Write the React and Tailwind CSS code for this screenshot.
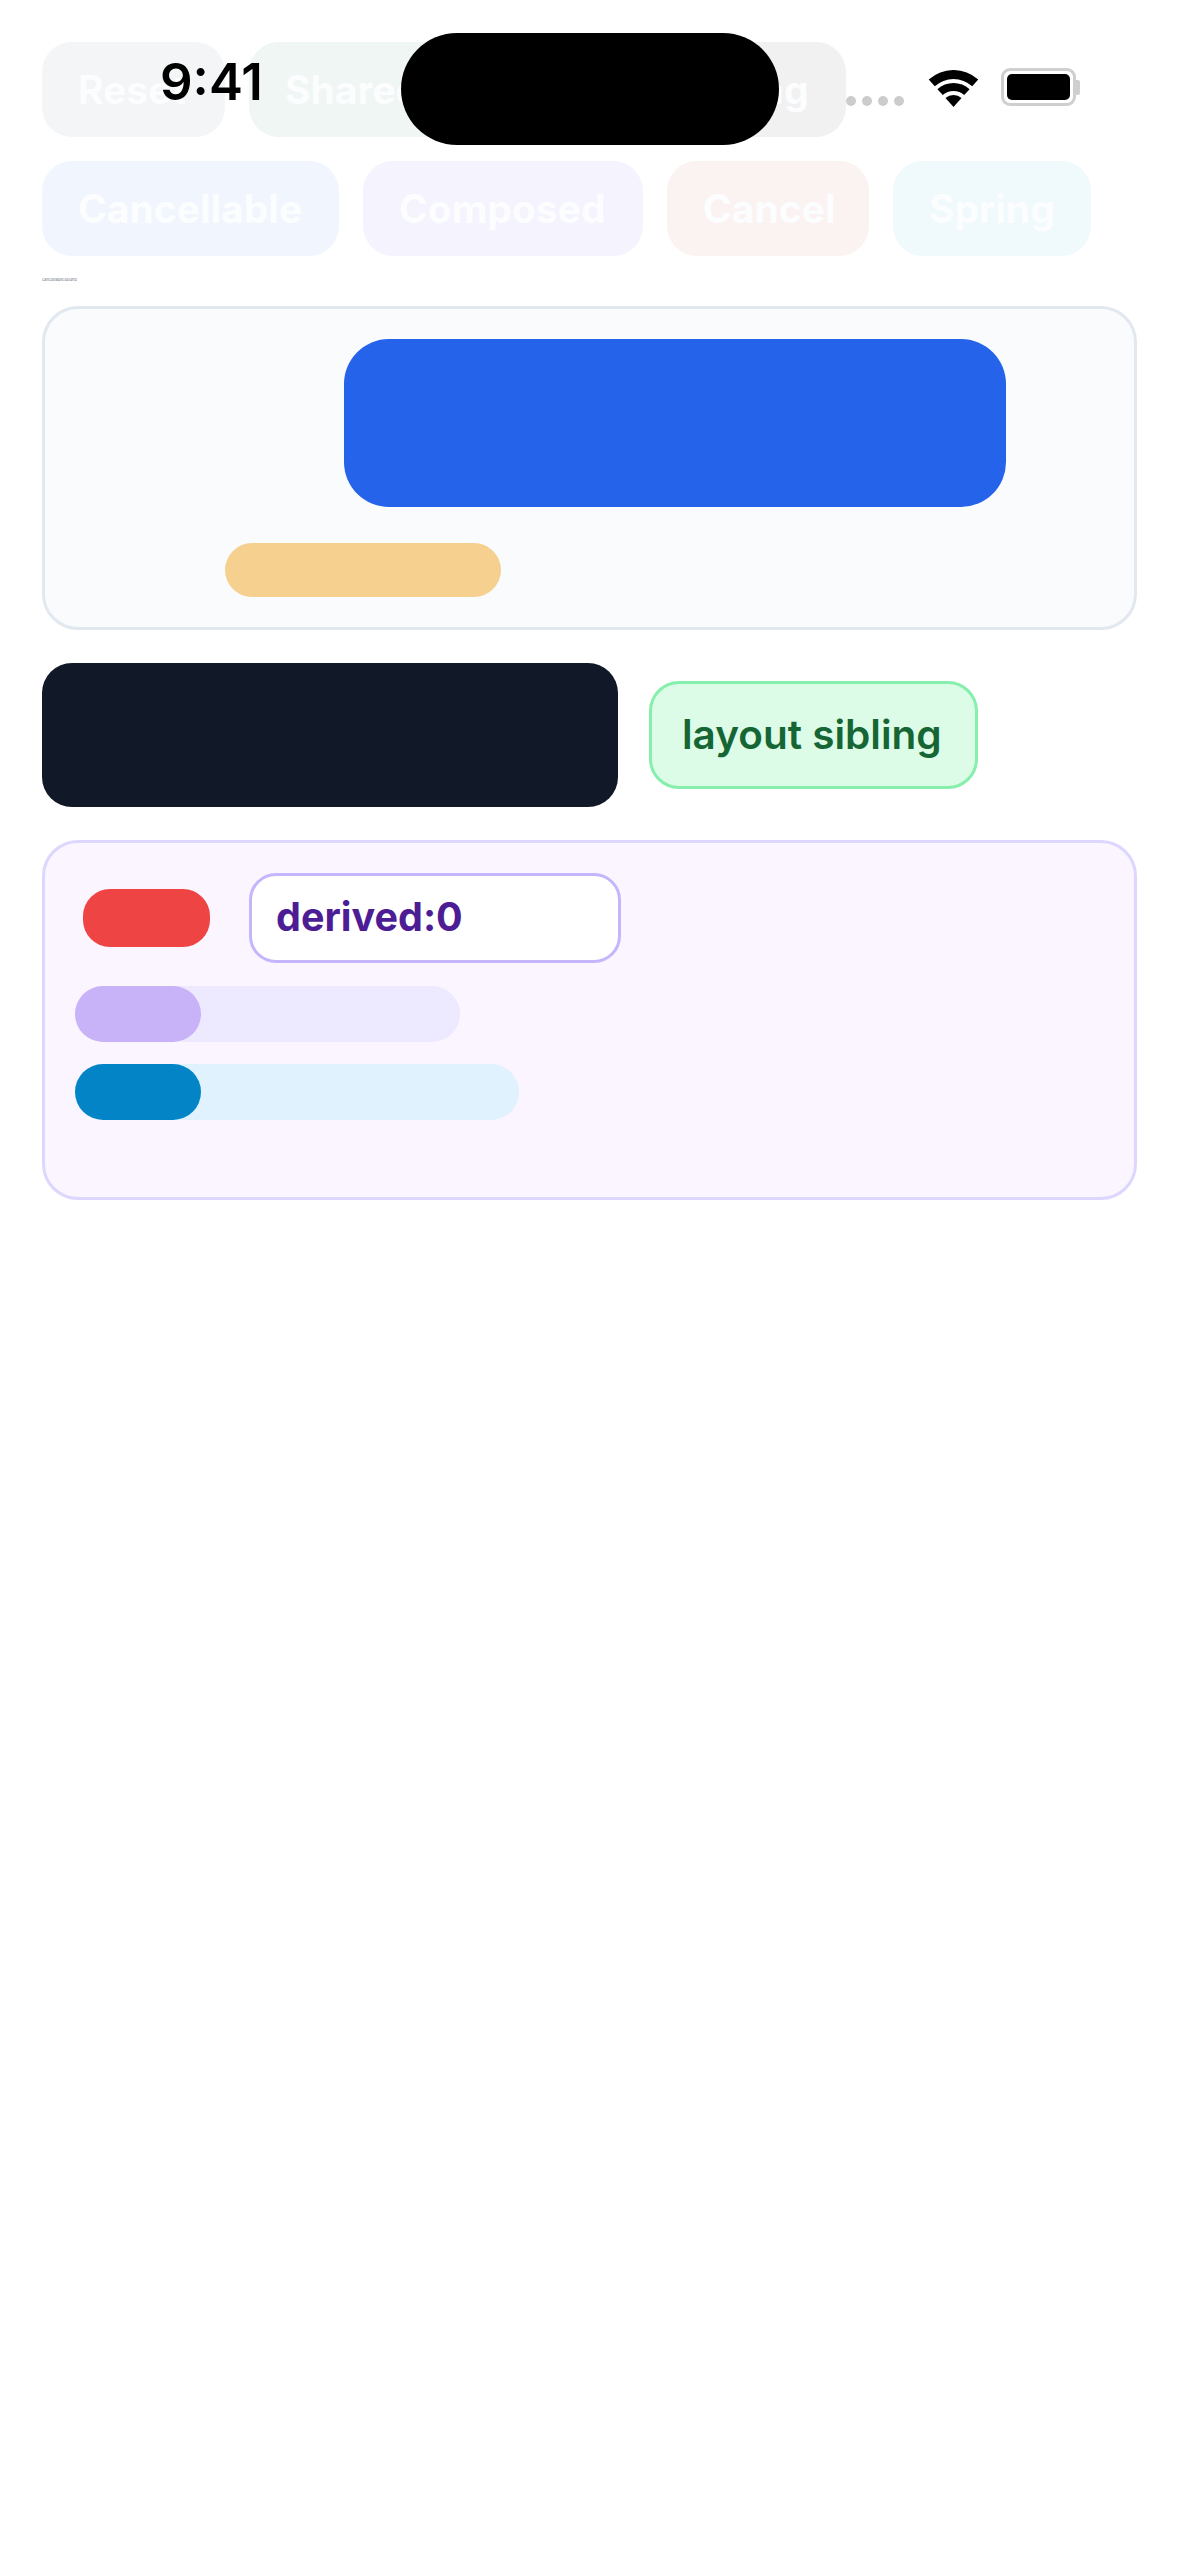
const FONT = '[font-family:Inter,"Noto_Sans",sans-serif]';

const ROW_ONE = [
  { label: 'Reset', bg: 'bg-[#f3f5f6]', w: 'w-[183px]' },
  { label: 'Shared', bg: 'bg-[#f0f6f4]', w: 'w-[220px]' },
  { label: 'Loop', bg: 'bg-[#f1f1f1]', w: 'w-[124px]' },
  { label: 'Timing', bg: 'bg-[#f1f1f1]', w: 'w-[205px]' },
];

const ROW_TWO = [
  { label: 'Cancellable', bg: 'bg-[#f1f6fe]', w: 'w-[297px]' },
  { label: 'Composed', bg: 'bg-[#f5f3fe]', w: 'w-[280px]' },
  { label: 'Cancel', bg: 'bg-[#fbf3f2]', w: 'w-[202px]' },
  { label: 'Spring', bg: 'bg-[#f0f9fc]', w: 'w-[198px]' },
];

function Pill({ label, bg, w }) {
  return (
    <div className={`${bg} ${w} h-[95px] shrink-0 rounded-[30px] pl-[36px] pt-[2px] flex items-center text-[39px] font-bold text-[#fcfdfe]`}>
      {label}
    </div>
  );
}

function Wifi() {
  return (
    <svg width="51" height="37" viewBox="-1 0 51 37" className="absolute left-[928px] top-[70px]" fill="#000">
      <path d="M-0.26 9.5A37 37 0 0 1 49.26 9.5L43.2 16.2A28 28 0 0 0 5.8 16.2Z" />
      <path d="M8.4 19.2A24 24 0 0 1 40.6 19.2L35.2 25.1A16 16 0 0 0 13.8 25.1Z" />
      <path d="M16.5 28.1A12 12 0 0 1 32.5 28.1L24.5 37Z" />
    </svg>
  );
}

function StatusBar() {
  return (
    <div className="absolute inset-x-0 top-0 h-[150px]">
      <div className="absolute left-[160px] top-[52px] text-[51px] leading-[60px] font-semibold text-black">9:41</div>
      <div className="absolute left-[401px] top-[33px] w-[378px] h-[112px] rounded-full bg-black" />
      <div className="absolute left-[846px] top-[96px] flex gap-[6px]">
        <span className="size-[10px] rounded-full bg-[#cccccc]" />
        <span className="size-[10px] rounded-full bg-[#cccccc]" />
        <span className="size-[10px] rounded-full bg-[#cccccc]" />
        <span className="size-[10px] rounded-full bg-[#cccccc]" />
      </div>
      <Wifi />
      <div className="absolute left-[1001px] top-[68px] w-[75px] h-[38px] rounded-[9px] border-[3px] border-[#cfcfcf] p-[3px]">
        <div className="w-full h-full rounded-[5px] bg-black" />
      </div>
      <div className="absolute left-[1076px] top-[80px] w-[4px] h-[15px] rounded-r-[2px] bg-[#cfcfcf]" />
    </div>
  );
}

function Track({ width, trackBg, thumbBg }) {
  return (
    <div className={`${width} ${trackBg} h-[56px] rounded-full`}>
      <div className={`${thumbBg} w-[126px] h-full rounded-full`} />
    </div>
  );
}

export default function App() {
  return (
    <div className={`relative min-h-[2556px] bg-white overflow-hidden ${FONT}`}>
      <div className="px-[42px] pt-[42px]">
        <div className="flex gap-[24px]">
          {ROW_ONE.map((b) => <Pill key={b.label} {...b} />)}
        </div>
        <div className="flex gap-[24px] mt-[24px]">
          {ROW_TWO.map((b) => <Pill key={b.label} {...b} />)}
        </div>
        <div className="mt-[22px] h-[4px] text-[4px] leading-[4px] text-[#6b7280]">cancellable:bound</div>

        <div className="mt-[24px] h-[324px] rounded-[36px] border-[3px] border-[#e2e8f0] bg-[#f9fbfd] px-[30px] pt-[30px]">
          <div className="ml-[269px] w-[662px] h-[168px] rounded-[45px] bg-[#2563eb]" />
          <div className="ml-[150px] mt-[36px] w-[276px] h-[54px] rounded-full bg-[#f5d08f]" />
        </div>

        <div className="mt-[33px] flex items-center gap-[31px]">
          <div className="w-[576px] h-[144px] rounded-[30px] bg-[#111827]" />
          <div className="w-[329px] h-[108px] rounded-[30px] border-[3px] border-[#86efac] bg-[#dcfce7] px-[30px] flex items-center text-[40.5px] font-semibold text-[#166534]">
            layout sibling
          </div>
        </div>

        <div className="mt-[33px] h-[360px] rounded-[36px] border-[3px] border-[#ddd6fe] bg-[#faf5ff] px-[30px] pt-[30px]">
          <div className="flex items-center gap-[39px]">
            <div className="ml-[8px] w-[127px] h-[58px] rounded-[27px] bg-[#ef4444]" />
            <div className="w-[372px] h-[90px] rounded-[27px] border-[3px] border-[#c4b5fd] bg-white px-[24px] flex items-center text-[39.5px] font-bold text-[#4c1d95]">
              derived:0
            </div>
          </div>
          <div className="mt-[23px] flex flex-col gap-[22px]">
            <Track width="w-[385px]" trackBg="bg-[#ede9fe]" thumbBg="bg-[#c8b2f8]" />
            <Track width="w-[444px]" trackBg="bg-[#e0f2fe]" thumbBg="bg-[#0284c7]" />
          </div>
        </div>
      </div>

      <StatusBar />
    </div>
  );
}
